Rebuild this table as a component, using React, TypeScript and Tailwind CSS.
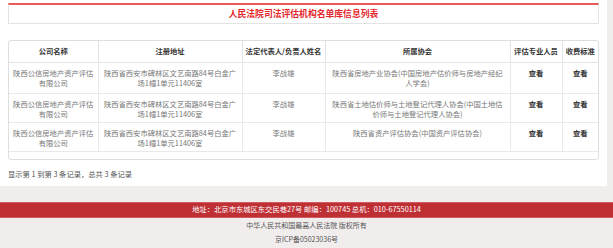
import React from "react";

const rows = [
  {
    name: "陕西公信房地产资产评估有限公司",
    addr: "陕西省西安市碑林区文艺南路84号白金广场1幢1单元11406室",
    rep: "李战雄",
    assoc: "陕西省房地产业协会(中国房地产估价师与房地产经纪人学会)",
    h: "h-[31px]",
  },
  {
    name: "陕西公信房地产资产评估有限公司",
    addr: "陕西省西安市碑林区文艺南路84号白金广场1幢1单元11406室",
    rep: "李战雄",
    assoc: "陕西省土地估价师与土地登记代理人协会(中国土地估价师与土地登记代理人协会)",
    h: "h-[29px]",
  },
  {
    name: "陕西公信房地产资产评估有限公司",
    addr: "陕西省西安市碑林区文艺南路84号白金广场1幢1单元11406室",
    rep: "李战雄",
    assoc: "陕西省资产评估协会(中国资产评估协会)",
    h: "h-[29px]",
  },
];

export default function App() {
  const font = { fontFamily: '"Noto Sans CJK SC", "Liberation Sans", sans-serif' };
  return (
    <div className="w-[613px] h-[248px] bg-[#f1eded] overflow-hidden" style={font}>
      <div className="w-[607px] h-[186px] bg-white pt-[3px] px-[8px]">
        <div className="h-[21px] border border-[#e3e3e3] border-t-2 border-t-[#e85a5a] flex items-center justify-center">
          <span className="text-[8.8px] font-bold text-[#e5262b] leading-none">人民法院司法评估机构名单库信息列表</span>
        </div>
        <div className="mt-[16px] border border-[#dedede] rounded-[3px] overflow-hidden">
          <table className="w-full table-fixed border-collapse text-[7.3px] leading-[10.5px]">
            <colgroup>
              <col className="w-[89px]" />
              <col className="w-[144px]" />
              <col className="w-[83px]" />
              <col className="w-[185px]" />
              <col className="w-[52px]" />
              <col />
            </colgroup>
            <thead>
              <tr className="h-[21px] text-[#333] font-bold">
                <th className="border-r border-b border-[#e3e3e3] text-center align-middle font-bold">公司名称</th>
                <th className="border-r border-b border-[#e3e3e3] text-center align-middle font-bold">注册地址</th>
                <th className="border-r border-b border-[#e3e3e3] text-center align-middle font-bold">法定代表人/负责人姓名</th>
                <th className="border-r border-b border-[#e3e3e3] text-center align-middle font-bold">所属协会</th>
                <th className="border-r border-b border-[#e3e3e3] text-center align-middle font-bold">评估专业人员</th>
                <th className="border-b border-[#e3e3e3] text-center align-middle font-bold">收费标准</th>
              </tr>
            </thead>
            <tbody className="text-[#777]">
              {rows.map((r, i) => (
                <tr key={i} className={r.h}>
                  <td className="border-r border-b border-[#e9e9e9] text-center align-top px-[4px] pt-[5px]">{r.name}</td>
                  <td className="border-r border-b border-[#e9e9e9] text-center align-top px-[5px] pt-[5px]">{r.addr}</td>
                  <td className="border-r border-b border-[#e9e9e9] text-center align-top px-[4px] pt-[5px]">{r.rep}</td>
                  <td className="border-r border-b border-[#e9e9e9] text-center align-top px-[4px] pt-[5px]">{r.assoc}</td>
                  <td className="border-r border-b border-[#e9e9e9] text-center align-top pt-[5px] font-bold text-[#333]">查看</td>
                  <td className="border-b border-[#e9e9e9] text-center align-top pt-[5px] font-bold text-[#333]">查看</td>
                </tr>
              ))}
            </tbody>
          </table>
          <div className="h-[7px]" />
        </div>
        <div className="mt-[9px] text-[7.3px] text-[#555] leading-[10px]">显示第 1 到第 3 条记录，总共 3 条记录</div>
      </div>
      <div className="mt-[16px] h-[16px] bg-[#bf3035] border-y border-[#cf5b5e] flex items-center justify-center">
        <span className="text-[7.3px] text-white leading-none">地址：北京市东城区东交民巷27号 邮编：100745 总机：010-67550114</span>
      </div>
      <div className="mt-0 flex flex-col items-center text-[7px] text-[#555] leading-[14px]">
        <div>中华人民共和国最高人民法院 版权所有</div>
        <div>京ICP备05023036号</div>
      </div>
    </div>
  );
}
